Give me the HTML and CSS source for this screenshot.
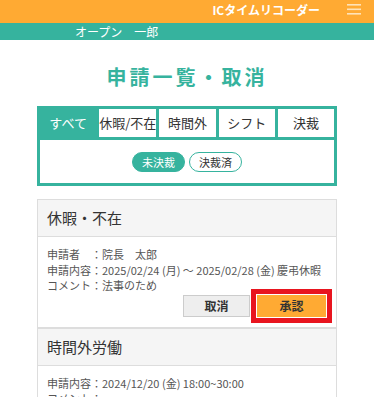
FILE: index.html
```html
<!DOCTYPE html>
<html lang="ja">

<head>
    <meta charset="UTF-8">
    <meta name="viewport" content="width=device-width, initial-scale=1.0">
    <title>申請一覧・取消</title>
    <link rel="stylesheet" href="styles.css">
</head>

<body>
    <header class="appHeader">
        <span class="appTitle">ICタイムリコーダー</span>
        <svg class="menuIcon" width="14" height="12" viewBox="0 0 14 12">
            <rect x="0" y="1" width="14" height="1.6" />
            <rect x="0" y="5.5" width="14" height="1.6" />
            <rect x="0" y="10" width="14" height="1.6" />
        </svg>
    </header>
    <div class="userBar">オープン　一郎</div>

    <main class="page">
        <h1 class="pageTitle">申請一覧・取消</h1>

        <div class="tabBox">
            <div class="tabRow">
                <span class="tab active">すべて</span>
                <span class="tab">休暇/不在</span>
                <span class="tab">時間外</span>
                <span class="tab">シフト</span>
                <span class="tab">決裁</span>
            </div>
            <div class="filterRow">
                <span class="pill filled">未決裁</span>
                <span class="pill">決裁済</span>
            </div>
        </div>

        <section class="card">
            <div class="cardHead">休暇・不在</div>
            <div class="cardBody">
                <p><span class="label">申請者</span>：院長　太郎</p>
                <p><span class="label">申請内容</span>：2025/02/24 (月) ～ 2025/02/28 (金) 慶弔休暇</p>
                <p><span class="label">コメント</span>：法事のため</p>
                <div class="actions">
                    <button class="btn cancel">取消</button>
                    <button class="btn approve marked">承認</button>
                </div>
            </div>
        </section>

        <section class="card">
            <div class="cardHead">時間外労働</div>
            <div class="cardBody">
                <p><span class="label">申請内容</span>：2024/12/20 (金) 18:00~30:00</p>
                <p><span class="label">コメント</span>：</p>
            </div>
        </section>
    </main>
</body>

</html>
```

FILE: styles.css
```css
/* 申請一覧 */

body {
    margin: 0;
    font-family: "Noto Sans CJK JP", "Noto Sans", sans-serif;
    color: #333;
    background: #fff;
}

.appHeader {
    height: 23px;
    background-color: #ffaa33;
    display: flex;
    align-items: center;
    justify-content: flex-end;
}

.appTitle {
    color: #fff;
    font-weight: bold;
    font-size: 12px;
    line-height: 1;
    margin-top: -4px;
}

.menuIcon {
    fill: #ffe3b8;
    margin: -6px 13px 0 27px;
}

.userBar {
    height: 17px;
    background-color: #36b39e;
    color: #fff;
    font-size: 12px;
    line-height: 17px;
    padding-left: 75px;
}

.page {
    width: 300px;
    margin: 0 auto;
}

.pageTitle {
    margin: 25px 0 17px;
    text-align: center;
    color: #36b39e;
    font-size: 20px;
    letter-spacing: 3px;
    line-height: 24px;
}

.tabBox {
    border: 3px solid #36b39e;
    background-color: #36b39e;
}

.tabRow {
    display: grid;
    grid-template-columns: repeat(5, 1fr);
    gap: 3px;
}

.tab {
    height: 28px;
    background: #fff;
    font-size: 13px;
    line-height: 28px;
    text-align: center;
    white-space: nowrap;
    color: #333;
}

.tab.active {
    background: #36b39e;
    color: #fff;
}

.filterRow {
    margin-top: 3px;
    height: 43px;
    background: #fff;
    display: flex;
    justify-content: center;
    align-items: center;
    gap: 4px;
}

.pill {
    width: 51px;
    height: 18px;
    border: 1px solid #36b39e;
    border-radius: 10px;
    font-size: 11px;
    line-height: 18px;
    text-align: center;
    color: #333;
}

.pill.filled {
    background: #36b39e;
    color: #fff;
}

.card {
    border: 1px solid #ddd;
}

.tabBox + .card {
    margin-top: 13px;
}

.cardHead {
    height: 36px;
    line-height: 36px;
    background: #f5f5f5;
    border-bottom: 1px solid #ddd;
    padding-left: 9px;
    font-size: 15px;
    color: #333;
}

.cardBody {
    padding: 10px 9px 10px;
    font-size: 11px;
    color: #555;
}

.cardBody p {
    margin: 0;
    line-height: 15.5px;
    white-space: nowrap;
}

.label {
    display: inline-block;
    width: 44px;
}

.actions {
    display: flex;
    justify-content: flex-end;
    gap: 7px;
    margin-top: 1px;
    padding-right: 1px;
}

.btn {
    height: 22px;
    padding: 0;
    font-family: inherit;
    font-size: 12px;
    font-weight: bold;
    color: #333;
    border-radius: 0;
}

.btn.cancel {
    width: 67px;
    background: #eee;
    border: 1px solid #ccc;
}

.btn.approve {
    width: 69px;
    background: #ffaa33;
    border: none;
}

.marked {
    outline: 5px solid #e8151f;
    outline-offset: 1px;
}
```
